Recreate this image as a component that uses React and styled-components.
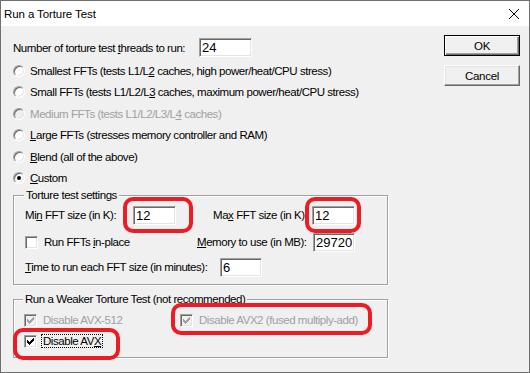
import React from 'react';
import styled, { createGlobalStyle } from 'styled-components';

const UI = `"Liberation Sans", Arial, sans-serif`;

const GlobalStyle = createGlobalStyle`
  html, body { margin: 0; padding: 0; background: #f0f0f0; }
  #root { width: 530px; height: 373px; }
`;

const Window = styled.div`
  width: 530px;
  height: 373px;
  box-sizing: border-box;
  border: 1px solid #707070;
  display: flex;
  flex-direction: column;
  background: #f0f0f0;
  font-family: ${UI};
  font-size: 11.5px;
  letter-spacing: -0.45px;
  color: #000;
  overflow: hidden;
`;

const TitleBar = styled.div`
  height: 25px;
  flex: none;
  background: #fff;
  display: flex;
  align-items: center;
  justify-content: space-between;
  padding: 0 10px 0 3px;
`;

const Title = styled.span`
  font-size: 11.5px;
  letter-spacing: -0.1px;
`;

const Body = styled.div`
  flex: 1;
  display: flex;
`;

const MainCol = styled.div`
  width: 443px;
  flex: none;
  box-sizing: border-box;
  padding: 9px 0 0 12px;
`;

const SideCol = styled.div`
  display: flex;
  flex-direction: column;
  gap: 9px;
  padding-top: 9px;
`;

const Button = styled.button`
  width: 76px;
  height: 21px;
  margin: 0;
  padding: 0;
  background: #f0f0f0;
  font-family: ${UI};
  font-size: 11.5px;
  letter-spacing: -0.3px;
  color: #000;
  border: 1px solid;
  border-color: ${p => (p.$default ? '#000' : '#fff #696969 #696969 #fff')};
  box-shadow: ${p =>
    p.$default
      ? 'inset 1px 1px 0 #fff, inset -1px -1px 0 #696969, inset -2px -2px 0 #a0a0a0'
      : 'inset -1px -1px 0 #a0a0a0, inset 1px 1px 0 #e3e3e3'};
`;

const Row = styled.div`
  height: ${p => p.$h || 20}px;
  margin-top: ${p => p.$gap || 0}px;
  display: flex;
  align-items: center;
`;

const Cell = styled.span`
  width: ${p => p.$w}px;
  flex: none;
  white-space: nowrap;
`;

const TextBox = styled.input`
  width: ${p => p.$w}px;
  height: 19px;
  box-sizing: border-box;
  margin: 0;
  padding: 0 0 0 2px;
  flex: none;
  border: 1px solid;
  border-color: #a0a0a0 #fff #fff #a0a0a0;
  box-shadow: inset 1px 1px 0 #696969, inset -1px -1px 0 #e3e3e3;
  background: #fff;
  font-family: ${UI};
  font-size: 13px;
  letter-spacing: 0;
  color: #000;
  outline: none;
`;

const OptionRow = styled.div`
  height: 21.5px;
  display: flex;
  align-items: center;
  gap: 5px;
  color: ${p => (p.$disabled ? '#a0a0a0' : '#000')};
  white-space: nowrap;
`;

const RadioDot = styled.span`
  width: 12px;
  height: 12px;
  box-sizing: border-box;
  flex: none;
  border-radius: 50%;
  border: 1px solid;
  border-color: #a0a0a0 #fff #fff #a0a0a0;
  box-shadow: inset 1px 1px 0 #696969, inset -1px -1px 0 #e3e3e3;
  background: ${p => (p.$disabled ? '#f0f0f0' : '#fff')};
  display: flex;
  align-items: center;
  justify-content: center;
  &::after {
    content: '';
    display: ${p => (p.$checked ? 'block' : 'none')};
    width: 4px;
    height: 4px;
    border-radius: 50%;
    background: #000;
  }
`;

const Group = styled.fieldset`
  width: 375px;
  box-sizing: border-box;
  min-width: 0;
  margin: ${p => p.$top}px 0 0;
  padding: ${p => p.$pad};
  border: 1px solid #a0a0a0;
  box-shadow: 1px 1px 0 #fff, inset 1px 1px 0 #fff;
`;

const Legend = styled.legend`
  padding: 0 2px;
  margin-left: ${p => p.$shift}px;
  line-height: 13px;
  background: #f0f0f0;
  white-space: nowrap;
`;

const CheckItem = styled.span`
  display: inline-flex;
  align-items: center;
  height: 20px;
  flex: none;
  width: ${p => (p.$w ? `${p.$w}px` : 'auto')};
  color: ${p => (p.$disabled ? '#a0a0a0' : '#000')};
  white-space: nowrap;
`;

const CheckBox = styled.span`
  width: 13px;
  height: 13px;
  box-sizing: border-box;
  flex: none;
  margin-right: 6px;
  border: 1px solid;
  border-color: #a0a0a0 #fff #fff #a0a0a0;
  box-shadow: inset 1px 1px 0 #696969, inset -1px -1px 0 #e3e3e3;
  background: ${p => (p.$disabled ? '#f0f0f0' : '#fff')};
  display: flex;
  align-items: center;
  justify-content: center;
`;

const Focus = styled.span`
  border: 1px dotted #000;
  padding: 0 1px;
  margin-left: -2px;
  line-height: 14px;
`;

const Marked = styled.span`
  position: relative;
  display: inline-flex;
  align-items: center;
  flex: none;
`;

const Ring = styled.span`
  position: absolute;
  top: ${p => p.$t}px;
  right: ${p => p.$r}px;
  bottom: ${p => p.$b}px;
  left: ${p => p.$l}px;
  border: 4px solid #ed1c24;
  border-radius: 10px;
  pointer-events: none;
`;

const CHECK = [[6, 0, 1], [5, 1, 2], [0, 2, 1], [4, 2, 3], [0, 3, 2], [3, 3, 3], [0, 4, 5], [1, 5, 3], [2, 6, 1]];

const Tick = ({ color }) => (
  <svg width="7" height="7" viewBox="0 0 7 7" shapeRendering="crispEdges">
    {CHECK.map(([x, y, w]) => (
      <rect key={`${x}-${y}`} x={x} y={y} width={w} height="1" fill={color} />
    ))}
  </svg>
);

const Check = ({ checked, disabled, children, w }) => (
  <CheckItem $disabled={disabled} $w={w}>
    <CheckBox $disabled={disabled}>{checked && <Tick color={disabled ? '#a0a0a0' : '#000'} />}</CheckBox>
    <span>{children}</span>
  </CheckItem>
);

const options = [
  { label: <>Smallest FFTs (tests L1/L<u>2</u> caches, high power/heat/CPU stress)</> },
  { label: <>Small FFTs (tests L1/L2/L<u>3</u> caches, maximum power/heat/CPU stress)</> },
  { label: <>Medium FFTs (tests L1/L2/L3/L<u>4</u> caches)</>, disabled: true },
  { label: <><u>L</u>arge FFTs (stresses memory controller and RAM)</> },
  { label: <><u>B</u>lend (all of the above)</> },
  { label: <><u>C</u>ustom</>, checked: true },
];

export default function App() {
  return (
    <>
      <GlobalStyle />
      <Window>
        <TitleBar>
          <Title>Run a Torture Test</Title>
          <svg width="10" height="10" viewBox="0 0 10 10">
            <path d="M0 0L10 10M10 0L0 10" stroke="#000" strokeWidth="1" />
          </svg>
        </TitleBar>
        <Body>
          <MainCol>
            <Row $h={25}>
              <Cell $w={186}>Number of torture test <u>t</u>hreads to run:</Cell>
              <TextBox $w={53} defaultValue="24" />
            </Row>
            {options.map((o, i) => (
              <OptionRow key={i} $disabled={o.disabled}>
                <RadioDot $disabled={o.disabled} $checked={o.checked} />
                <span>{o.label}</span>
              </OptionRow>
            ))}

            <Group $top={0} $pad="3px 0 7px 11px">
              <Legend $shift={-1}>Torture test settings</Legend>
              <Row>
                <Cell $w={108}>Mi<u>n</u> FFT size (in K):</Cell>
                <Marked>
                  <TextBox $w={43} defaultValue="12" />
                  <Ring $t={-9} $r={-17} $b={-8} $l={-10} />
                </Marked>
                <Cell $w={37} />
                <Cell $w={99}>Ma<u>x</u> FFT size (in K):</Cell>
                <Marked>
                  <TextBox $w={43} defaultValue="12" />
                  <Ring $t={-9} $r={-6} $b={-8} $l={-7} />
                </Marked>
              </Row>
              <Row $gap={7}>
                <Check w={172}>Run FFTs <u>i</u>n-place</Check>
                <Cell $w={116}><u>M</u>emory to use (in MB):</Cell>
                <TextBox $w={42} defaultValue="29720" />
              </Row>
              <Row $gap={5}>
                <Cell $w={195}><u>T</u>ime to run each FFT size (in minutes):</Cell>
                <TextBox $w={42} defaultValue="6" />
              </Row>
            </Group>

            <Group $top={8} $pad="4px 0 6px 10px">
              <Legend $shift={-1}>Run a Weaker Torture Test (not recommended)</Legend>
              <Row>
                <Check w={156} checked disabled>Disable AVX-512</Check>
                <Marked>
                  <Check checked disabled>Disable AVX2 (fused multiply-add)</Check>
                  <Ring $t={-7} $r={-14} $b={-5} $l={-9} />
                </Marked>
              </Row>
              <Row $gap={1}>
                <Marked>
                  <Check checked>
                    <Focus>Disable AV<u>X</u></Focus>
                  </Check>
                  <Ring $t={-3} $r={-17} $b={-9} $l={-11} />
                </Marked>
              </Row>
            </Group>
          </MainCol>
          <SideCol>
            <Button $default>OK</Button>
            <Button>Cancel</Button>
          </SideCol>
        </Body>
      </Window>
    </>
  );
}
